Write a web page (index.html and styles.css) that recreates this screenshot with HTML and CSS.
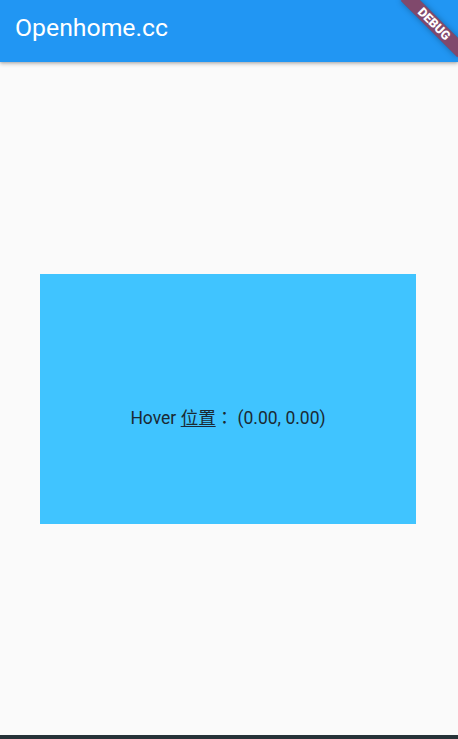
FILE: index.html
```html
<!DOCTYPE html>
<html lang="zh-Hant">
<head>
<meta charset="utf-8">
<title>Openhome.cc</title>
<link rel="stylesheet" href="styles.css">
</head>
<body>
<div class="app">
  <header class="appbar">
    <h1 class="title">Openhome.cc</h1>
  </header>
  <main class="content">
    <div class="hover-box">
      <span class="label">Hover <span class="cjk">位置</span>：&nbsp;(0.00, 0.00)</span>
    </div>
  </main>
  <div class="navbar"></div>
  <div class="debug-banner">DEBUG</div>
</div>
</body>
</html>
```

FILE: styles.css
```css
html, body {
  margin: 0;
  padding: 0;
}
body {
  background: #fafafa;
  font-family: Roboto, "Noto Sans CJK TC", sans-serif;
}
.app {
  position: relative;
  width: 458px;
  height: 739px;
  display: flex;
  flex-direction: column;
  overflow: hidden;
}
.appbar {
  height: 62px;
  flex: 0 0 62px;
  background: #2196f3;
  box-shadow: 0 2px 4px rgba(0,0,0,0.22), 0 1px 2px rgba(0,0,0,0.12);
  position: relative;
  z-index: 1;
}
.title {
  margin: 0;
  padding-left: 15px;
  font-size: 24.8px;
  font-weight: 400;
  line-height: 56px;
  color: #ffffff;
}
.content {
  flex: 1;
  display: flex;
  align-items: center;
  justify-content: center;
  padding-right: 2px;
}
.hover-box {
  width: 376px;
  height: 250px;
  background: #40c4ff;
  display: flex;
  align-items: center;
  justify-content: center;
  padding-top: 38px;
  box-sizing: border-box;
}
.label {
  font-size: 17.5px;
  color: #1b2a33;
  line-height: 21px;
}
.cjk {
  font-family: "Noto Sans CJK TC", sans-serif;
  text-decoration: underline;
  text-decoration-color: #1d2a3a;
  text-underline-offset: 2px;
}
.navbar {
  flex: 0 0 4px;
  background: #263238;
}
.debug-banner {
  position: absolute;
  left: 394px;
  top: 17px;
  width: 80px;
  height: 14px;
  transform: rotate(45deg);
  background: rgba(183, 28, 28, 0.63);
  box-shadow: 0 0 6px rgba(0,0,0,0.3);
  color: #ffffff;
  font-family: Roboto, sans-serif;
  font-size: 12.5px;
  font-weight: 900;
  line-height: 14px;
  text-align: center;
  z-index: 2;
}
```
